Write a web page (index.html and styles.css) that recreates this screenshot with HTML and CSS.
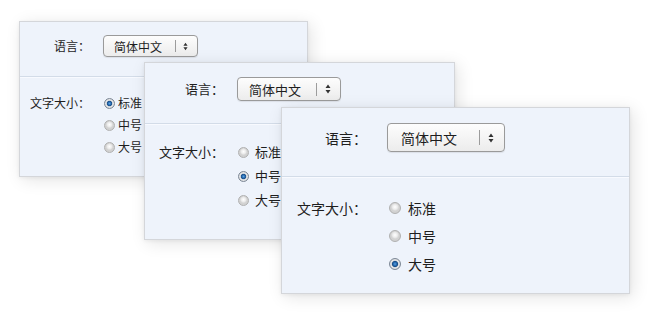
FILE: index.html
```
<!DOCTYPE html>
<html lang="zh">
<head>
<meta charset="utf-8">
<link rel="stylesheet" href="styles.css">
</head>
<body>
<div class="stage">
  <div class="card card-s">
    <div class="sec sec-lang">
      <div class="label">语言<span class="colon">：</span></div>
      <div class="select"><span class="sel-text">简体中文</span><span class="sel-sep"></span><svg class="sel-arrow" viewBox="0 0 6 10"><path d="M3 0.5 L5.5 4 H0.5 Z M3 9.5 L5.5 6 H0.5 Z"/></svg></div>
    </div>
    <div class="sec sec-size">
      <div class="label">文字大小<span class="colon">：</span></div>
      <div class="radios">
        <div class="radio on"><span class="dot"></span><span>标准</span></div>
        <div class="radio"><span class="dot"></span><span>中号</span></div>
        <div class="radio"><span class="dot"></span><span>大号</span></div>
      </div>
    </div>
  </div>
  <div class="card card-m">
    <div class="sec sec-lang">
      <div class="label">语言<span class="colon">：</span></div>
      <div class="select"><span class="sel-text">简体中文</span><span class="sel-sep"></span><svg class="sel-arrow" viewBox="0 0 6 10"><path d="M3 0.5 L5.5 4 H0.5 Z M3 9.5 L5.5 6 H0.5 Z"/></svg></div>
    </div>
    <div class="sec sec-size">
      <div class="label">文字大小<span class="colon">：</span></div>
      <div class="radios">
        <div class="radio"><span class="dot"></span><span>标准</span></div>
        <div class="radio on"><span class="dot"></span><span>中号</span></div>
        <div class="radio"><span class="dot"></span><span>大号</span></div>
      </div>
    </div>
  </div>
  <div class="card card-l">
    <div class="sec sec-lang">
      <div class="label">语言<span class="colon">：</span></div>
      <div class="select"><span class="sel-text">简体中文</span><span class="sel-sep"></span><svg class="sel-arrow" viewBox="0 0 6 10"><path d="M3 0.5 L5.5 4 H0.5 Z M3 9.5 L5.5 6 H0.5 Z"/></svg></div>
    </div>
    <div class="sec sec-size">
      <div class="label">文字大小<span class="colon">：</span></div>
      <div class="radios">
        <div class="radio"><span class="dot"></span><span>标准</span></div>
        <div class="radio"><span class="dot"></span><span>中号</span></div>
        <div class="radio on"><span class="dot"></span><span>大号</span></div>
      </div>
    </div>
  </div>
</div>
</body>
</html>
```
FILE: styles.css
```
html, body {
  margin: 0;
  padding: 0;
  background: #ffffff;
}
.stage {
  position: relative;
  width: 654px;
  height: 317px;
  overflow: hidden;
  font-family: "Noto Sans CJK SC", "Noto Sans", sans-serif;
  color: #1e1e1e;
}
.card {
  position: absolute;
  box-sizing: border-box;
  background: #eef3fb;
  border: 1px solid #d4d6da;
  box-shadow: 3px 3px 16px rgba(0, 0, 0, 0.11), 0 1px 4px rgba(0, 0, 0, 0.06);
  display: flex;
  flex-direction: column;
}
.sec {
  display: flex;
  align-items: flex-start;
}
.sec-lang {
  align-items: center;
  border-bottom: 1px solid #d3dce8;
  box-shadow: 0 1px 0 #f8faff;
}
.label {
  text-align: right;
  white-space: nowrap;
  flex: none;
}
.colon {
  font-family: "Noto Sans CJK TC", "Noto Sans CJK SC", sans-serif;
}
.select {
  box-sizing: border-box;
  display: flex;
  align-items: center;
  border: 1px solid #9a9a9a;
  border-radius: 4px;
  background: linear-gradient(#fdfdfd, #ececec);
  box-shadow: 0 1px 1px rgba(0,0,0,0.08);
}
.sel-text {
  flex: 1;
  white-space: nowrap;
}
.sel-sep {
  width: 1px;
  background: #9c9c9c;
}
.sel-arrow {
  fill: #333333;
}
.radios {
  display: flex;
  flex-direction: column;
}
.radio {
  display: flex;
  align-items: center;
  white-space: nowrap;
}
.dot {
  box-sizing: border-box;
  border-radius: 50%;
  border: 1px solid #b0b0b0;
  background: radial-gradient(circle closest-side at 50% 40%, #ffffff 0%, #ececec 60%, #d2d2d2 100%);
  flex: none;
}
.radio.on .dot {
  border-color: #7d8896;
  background: radial-gradient(circle closest-side at 50% 50%, #5aa0e0 0%, #2468ae 35%, #184a82 55%, #c7ced6 66%, #eeeeee 82%, #cfd2d6 100%);
}

/* small card */
.card-s {
  left: 19px;
  top: 21px;
  width: 289px;
  height: 156px;
  font-size: 12px;
}
.card-s .sec-lang {
  padding: 13px 0 19px;
}
.card-s .sec-size {
  padding-top: 15px;
}
.card-s .label {
  width: 70px;
  line-height: 22px;
}
.card-s .select {
  margin-left: 13px;
  width: 95px;
  height: 22px;
  padding-left: 10px;
}
.card-s .sel-sep { height: 12px; }
.card-s .sel-arrow { width: 5px; height: 9px; margin: 0 9px 0 7px; }
.card-s .radios { margin-left: 14px; }
.card-s .radio { line-height: 22px; }
.card-s .dot { width: 11px; height: 11px; margin-right: 3px; }

/* medium card */
.card-m {
  left: 144px;
  top: 62px;
  width: 311px;
  height: 178px;
  font-size: 13px;
}
.card-m .sec-lang {
  padding: 14px 0 22px;
}
.card-m .sec-size {
  padding-top: 16px;
}
.card-m .label {
  width: 79px;
  line-height: 24px;
}
.card-m .select {
  margin-left: 13px;
  width: 104px;
  height: 24px;
  padding-left: 11px;
}
.card-m .sel-sep { height: 13px; }
.card-m .sel-arrow { width: 6px; height: 10px; margin: 0 9px 0 8px; }
.card-m .radios { margin-left: 14px; }
.card-m .radio { line-height: 24px; }
.card-m .dot { width: 11px; height: 11px; margin-right: 6px; }

/* large card */
.card-l {
  left: 281px;
  top: 107px;
  width: 349px;
  height: 187px;
  font-size: 14px;
}
.card-l .sec-lang {
  padding: 15px 0 24px;
}
.card-l .sec-size {
  padding-top: 17px;
}
.card-l .label {
  width: 85px;
  line-height: 28px;
}
.card-l .select {
  margin-left: 20px;
  width: 118px;
  height: 29px;
  padding-left: 13px;
}
.card-l .sel-sep { height: 15px; }
.card-l .sel-arrow { width: 6px; height: 10px; margin: 0 10px 0 8px; }
.card-l .radios { margin-left: 22px; }
.card-l .radio { line-height: 28px; }
.card-l .dot { width: 12px; height: 12px; margin-right: 7px; }
```
